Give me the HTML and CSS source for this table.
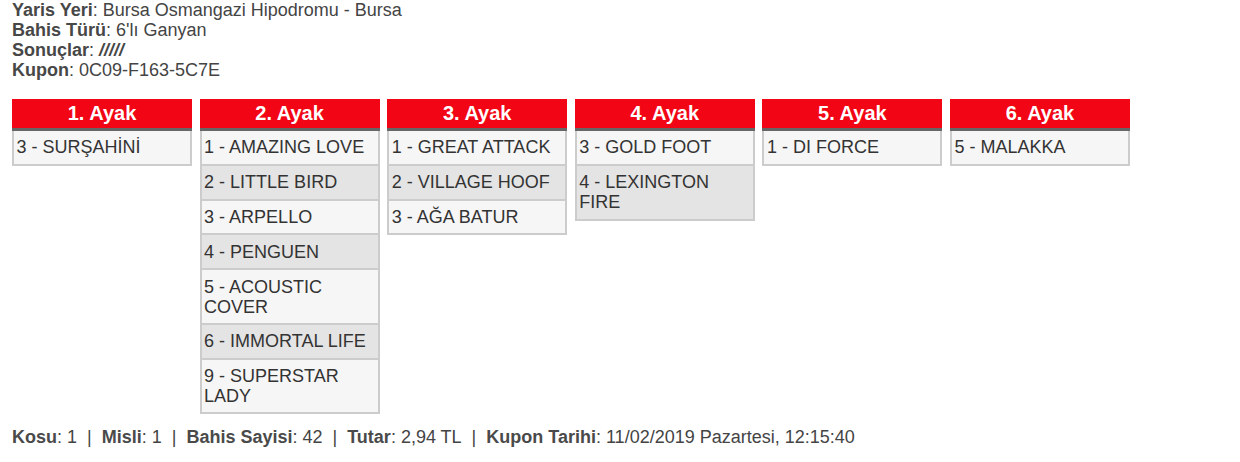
FILE: index.html
```html
<!DOCTYPE html>
<html lang="tr">
<head>
<meta charset="utf-8">
<title>Kupon</title>
<link rel="stylesheet" href="styles.css">
</head>
<body>
<div class="page">
  <div class="info">
    <div class="info-line"><b>Yaris Yeri</b>: Bursa Osmangazi Hipodromu - Bursa</div>
    <div class="info-line"><b>Bahis Türü</b>: 6'lı Ganyan</div>
    <div class="info-line"><b>Sonuçlar</b>: <b><i>/////</i></b></div>
    <div class="info-line"><b>Kupon</b>: 0C09-F163-5C7E</div>
  </div>

  <div class="legs">
    <div class="leg">
      <div class="leg-head">1. Ayak</div>
      <div class="leg-row">3 - SURŞAHİNİ</div>
    </div>
    <div class="leg">
      <div class="leg-head">2. Ayak</div>
      <div class="leg-row">1 - AMAZING LOVE</div>
      <div class="leg-row">2 - LITTLE BIRD</div>
      <div class="leg-row">3 - ARPELLO</div>
      <div class="leg-row">4 - PENGUEN</div>
      <div class="leg-row">5 - ACOUSTIC COVER</div>
      <div class="leg-row">6 - IMMORTAL LIFE</div>
      <div class="leg-row">9 - SUPERSTAR LADY</div>
    </div>
    <div class="leg">
      <div class="leg-head">3. Ayak</div>
      <div class="leg-row">1 - GREAT ATTACK</div>
      <div class="leg-row">2 - VILLAGE HOOF</div>
      <div class="leg-row">3 - AĞA BATUR</div>
    </div>
    <div class="leg">
      <div class="leg-head">4. Ayak</div>
      <div class="leg-row">3 - GOLD FOOT</div>
      <div class="leg-row">4 - LEXINGTON FIRE</div>
    </div>
    <div class="leg">
      <div class="leg-head">5. Ayak</div>
      <div class="leg-row">1 - DI FORCE</div>
    </div>
    <div class="leg">
      <div class="leg-head">6. Ayak</div>
      <div class="leg-row">5 - MALAKKA</div>
    </div>
  </div>

  <div class="summary">
    <b>Kosu</b>: 1<span class="sep">|</span><b>Misli</b>: 1<span class="sep">|</span><b>Bahis Sayisi</b>: 42<span class="sep">|</span><b>Tutar</b>: 2,94 TL<span class="sep">|</span><b>Kupon Tarihi</b>: 11/02/2019 Pazartesi, 12:15:40
  </div>
</div>
</body>
</html>
```

FILE: styles.css
```css
html, body {
  margin: 0;
  padding: 0;
  background: #ffffff;
}

body {
  font-family: "Liberation Sans", Arial, sans-serif;
  font-size: 18px;
  line-height: 20px;
  color: #444444;
}

.page {
  padding: 0 12px;
}

.info b {
  color: #474747;
}

.legs {
  display: flex;
  align-items: flex-start;
  gap: 7.6px;
  margin-top: 19px;
}

.leg {
  width: 180px;
  flex: 0 0 180px;
}

.leg-head {
  height: 29px;
  line-height: 29px;
  background: #f20514;
  color: #ffffff;
  font-weight: bold;
  font-size: 20px;
  text-align: center;
  border-bottom: 3px solid #666666;
}

.leg-row {
  border: 2px solid #cccccc;
  border-top: none;
  padding: 6.4px 5px 6.4px 2.5px;
  line-height: 20px;
  color: #333333;
  background: #f6f6f6;
}

.leg-row:nth-of-type(odd) {
  background: #e4e4e4;
}

.summary {
  margin-top: 13px;
  color: #444444;
}

.summary b {
  color: #4a4a4a;
}

.sep {
  margin: 0 10px;
}
```
